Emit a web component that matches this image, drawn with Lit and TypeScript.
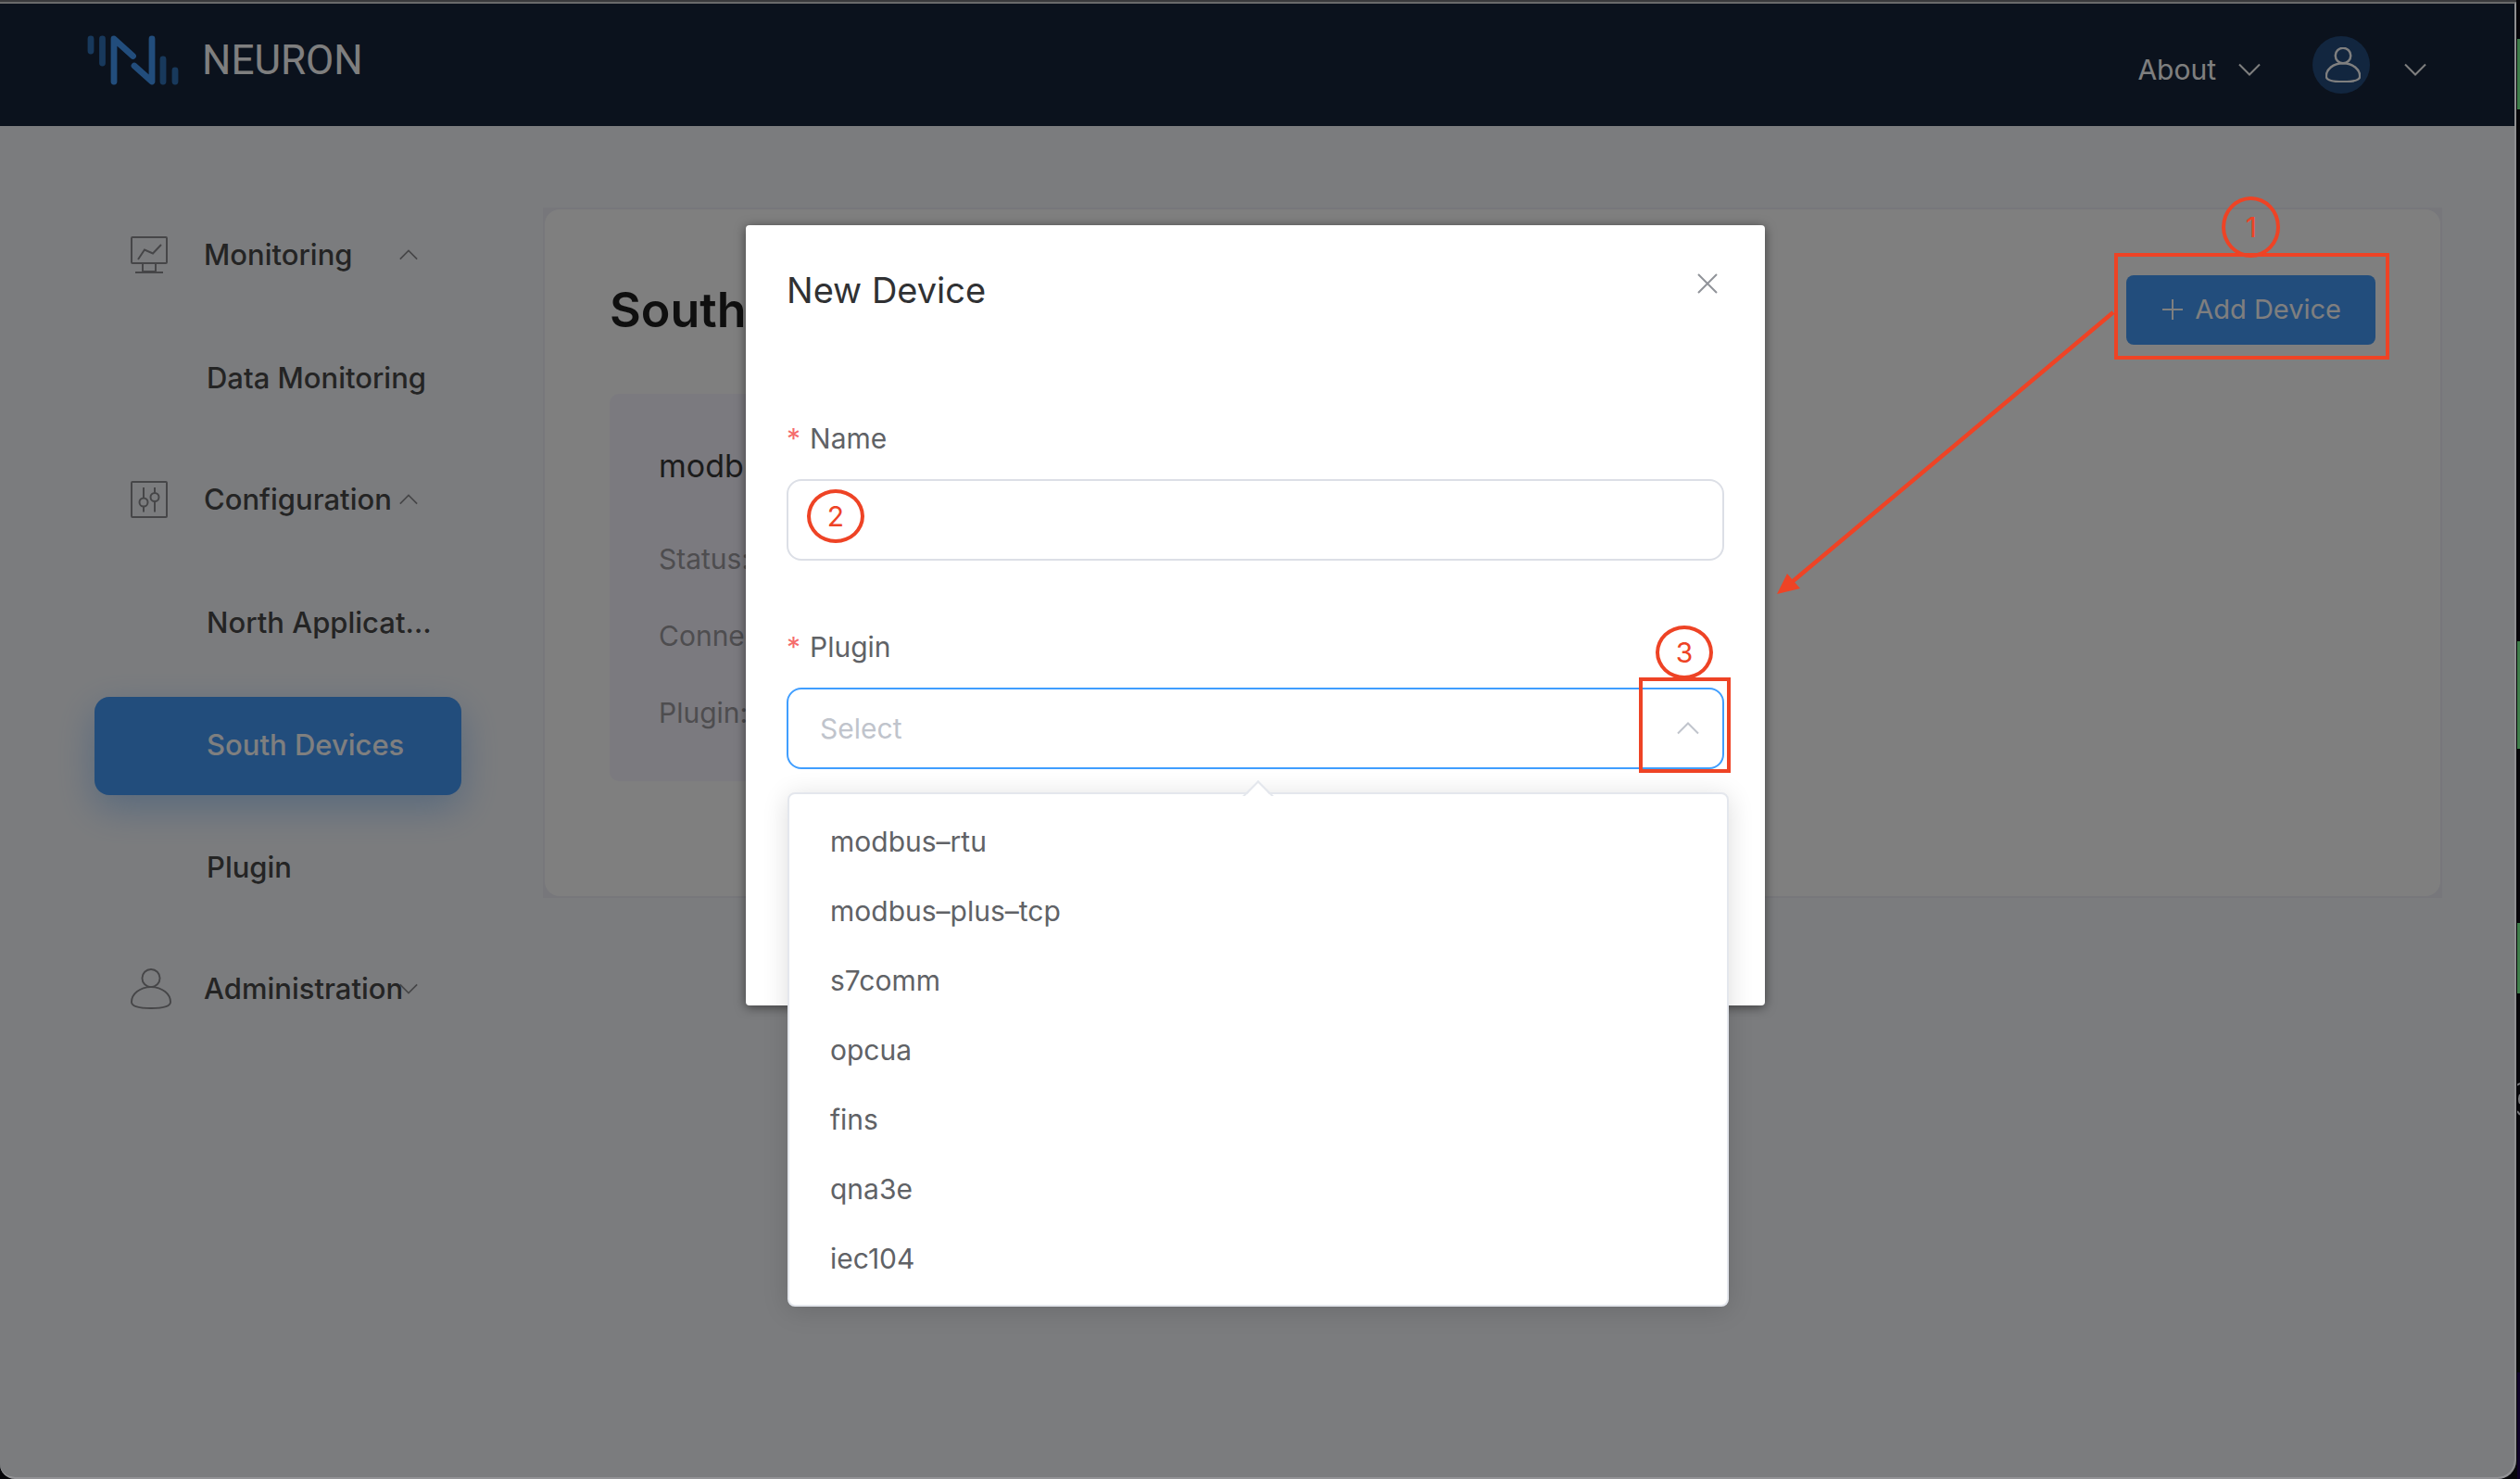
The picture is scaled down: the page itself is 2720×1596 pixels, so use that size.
import { LitElement, html, css, svg, nothing } from "lit";
import { customElement, state } from "lit/decorators.js";

type Icon = "monitor" | "sliders" | "user";
interface Entry {
  label: string;
  icon?: Icon;
  open?: boolean;
  active?: boolean;
}

const NAV: Entry[] = [
  { label: "Monitoring", icon: "monitor", open: true },
  { label: "Data Monitoring" },
  { label: "Configuration", icon: "sliders", open: true },
  { label: "North Applications" },
  { label: "South Devices", active: true },
  { label: "Plugin" },
  { label: "Administration", icon: "user", open: false },
];

const PLUGINS = ["modbus–rtu", "modbus–plus–tcp", "s7comm", "opcua", "fins", "qna3e", "iec104"];

const userIcon = (cls: string) => html`<svg class=${cls} viewBox="0 0 46 46" fill="none" stroke="currentColor" aria-hidden="true">
  <circle cx="23" cy="11" r="10"></circle>
  <path d="M23 21C10 21 1 29 1 38C1 43 10 45 23 45S45 43 45 38C45 29 36 21 23 21Z"></path>
</svg>`;

const icons = {
  monitor: html`<svg class="nav-icon" viewBox="0 0 40 40" fill="none" stroke="currentColor" stroke-width="2" aria-hidden="true">
    <rect x="1" y="1" width="38" height="28" rx="1"></rect>
    <path d="M8 25L15 14.500L24 18.500L33 9M13 29V38H27V29M5 39H35"></path>
  </svg>`,
  sliders: html`<svg class="nav-icon" viewBox="0 0 40 40" fill="none" stroke="currentColor" stroke-width="2" aria-hidden="true">
    <rect x="1" y="1" width="38" height="38" rx="1"></rect>
    <circle cx="14" cy="23" r="4.500"></circle>
    <circle cx="26" cy="17.500" r="4.500"></circle>
    <path d="M14 7V18.500M14 27.500V33.500M26 7V13M26 22V33.500"></path>
  </svg>`,
  user: userIcon("nav-icon nav-user"),
};

const chevron = (cls: string, up: boolean) => html`<svg class=${cls} viewBox="0 0 24 14" fill="none" stroke="currentColor" stroke-width="2" aria-hidden="true">
  ${up ? svg`<path d="M1 12.500L12 1.500L23 12.500"></path>` : svg`<path d="M1 1.500L12 12.500L23 1.500"></path>`}
</svg>`;

@customElement("app-root")
export class AppRoot extends LitElement {
  @state() private dialog = true;
  @state() private dropdown = true;
  @state() private plugin = "";

  static styles = css`
    :host {
      display: block;
      font-family: Inter, "Liberation Sans", sans-serif;
      font-size: 30px;
      line-height: 40px;
      color: #484848;
      --blue: #459af8;
      --red: #ee4325;
    }
    * {
      box-sizing: border-box;
    }
    button,
    input,
    select {
      font: inherit;
      color: inherit;
      margin: 0;
      padding: 0;
      border: 0;
      background: none;
    }
    a {
      color: inherit;
      text-decoration: none;
    }
    .desktop {
      display: grid;
      grid-template-columns: 1fr 3px;
      column-gap: 1px;
      min-height: 100vh;
      background: #07070a;
    }
    .window {
      position: relative;
      display: flex;
      flex-direction: column;
      border-top: 2px solid #6a6a6b;
      border-right: 2px solid #8f8f91;
      border-bottom: 2px solid #929295;
      border-radius: 0 0 20px 16px;
      margin-top: 2px;
      box-shadow: 0 -2px #3a3a3d;
      background: #f7f9fd;
      overflow: hidden;
    }
    .backdrop {
      position: absolute;
      inset: 0;
      background: rgba(0, 0, 0, 0.5);
      z-index: 10;
    }
    .strip {
      display: grid;
      grid-template-rows: 42px 76px 574px 116px 188px 76px 96px 36px 277px 1fr;
      overflow: hidden;
    }
    .green {
      background: #3e7d49;
    }
    .green:nth-child(1) {
      grid-row: 2;
    }
    .green:nth-child(2) {
      grid-row: 4;
    }
    .green:nth-child(3) {
      grid-row: 6;
    }
    .glyph {
      grid-row: 8;
      width: 3px;
      height: 36px;
    }
    .dusk {
      grid-row: 10;
      background: #0f0228;
    }
    header {
      display: flex;
      align-items: center;
      justify-content: space-between;
      height: 132px;
      padding: 0 95px 0 94px;
      background: #16243a;
      color: #fff;
    }
    .brand {
      display: flex;
      align-items: center;
      gap: 24px;
      padding-bottom: 10px;
      font: 400 44px/52px Roboto, sans-serif;
    }
    .logo {
      width: 100px;
      height: 54px;
    }
    .tools {
      display: flex;
      align-items: center;
    }
    .menu {
      display: flex;
      align-items: center;
      gap: 24px;
      padding-top: 10px;
    }
    .tool-chevron {
      width: 24px;
      height: 14px;
    }
    .avatar {
      display: grid;
      place-items: center;
      width: 62px;
      height: 62px;
      padding-left: 4px;
      margin: 0 37px 0 56px;
      border-radius: 50%;
      background: #244c7e;
    }
    .avatar-icon {
      width: 38px;
      height: 38px;
      stroke-width: 3px;
    }
    .body {
      display: flex;
      align-items: flex-start;
      gap: 88px;
      padding: 88px 78px 88px 102px;
    }
    nav {
      display: flex;
      flex-direction: column;
      gap: 26px;
      width: 396px;
      flex: none;
      font-size: 31px;
      font-weight: 500;
    }
    .item {
      display: grid;
      grid-template-columns: 46px 1fr;
      align-items: center;
      column-gap: 36px;
      height: 106px;
      padding: 0 30px 2px 39px;
      border-radius: 16px;
      text-align: left;
    }
    .item.active {
      background: var(--blue);
      color: #fff;
      box-shadow: 0 14px 40px rgba(69, 154, 248, 0.4);
    }
    .text {
      grid-column: 2;
      overflow: hidden;
      white-space: nowrap;
      text-overflow: ellipsis;
    }
    .item.group {
      grid-template-columns: 46px 244px 20px;
      column-gap: 0;
      padding: 0 0 4px 39px;
    }
    .item.group .text {
      padding-left: 33px;
      overflow: visible;
    }
    .nav-icon {
      width: 40px;
      height: 40px;
      color: #8c8c90;
    }
    .nav-user {
      width: 44px;
      height: 46px;
      stroke-width: 2px;
    }
    .nav-chevron {
      width: 20px;
      height: 12px;
      color: #8c8c90;
    }
    .frame {
      flex: 1;
      min-width: 0;
      padding: 2px;
      background: #eeeff6;
    }
    .panel {
      display: flex;
      flex-direction: column;
      gap: 53px;
      padding: 71px 70px 124px;
      border-radius: 16px;
      background: #fff;
    }
    .panel-head {
      display: flex;
      align-items: center;
      justify-content: space-between;
    }
    h1 {
      margin: 0;
      font-size: 52px;
      line-height: 60px;
      font-weight: 600;
      color: #1e1e1e;
    }
    .add-wrap {
      position: relative;
    }
    .add {
      display: flex;
      align-items: center;
      gap: 12px;
      height: 75px;
      padding: 0 37px 2px 38px;
      border-radius: 8px;
      background: var(--blue);
      color: #fff;
      font-size: 29px;
    }
    .plus {
      width: 24px;
      height: 24px;
    }
    .device {
      width: 570px;
      height: 418px;
      padding: 58px 53px;
      border-radius: 10px;
      background: #f6f4ff;
    }
    h2 {
      margin: 0 0 60px;
      font-size: 34px;
      line-height: 40px;
      font-weight: 400;
      color: #383838;
    }
    .device p {
      margin: 0 0 43px;
      color: #9c9a9f;
    }
    .dialog {
      position: absolute;
      z-index: 15;
      top: 239px;
      left: 50%;
      margin-left: -552px;
      width: 1100px;
      height: 842px;
      padding: 50px 44px;
      border-radius: 4px;
      background: #fff;
      box-shadow: 0 2px 12px rgba(0, 0, 0, 0.5);
      color: #606266;
    }
    .dialog-head {
      display: flex;
      align-items: flex-start;
      justify-content: space-between;
      margin-bottom: 120px;
    }
    .dialog-head h2 {
      margin: 0;
      font-size: 38px;
      line-height: 40px;
      color: #303133;
    }
    .close {
      width: 22px;
      height: 22px;
      margin: 2px 7px 0 0;
      display: grid;
      color: #909399;
    }
    .field {
      display: flex;
      flex-direction: column;
      gap: 24px;
      margin-bottom: 73px;
    }
    .field label {
      display: flex;
      gap: 10px;
    }
    .star {
      color: #f56c6c;
    }
    .control {
      position: relative;
    }
    .box {
      display: block;
      width: 100%;
      height: 88px;
      padding: 0 34px;
      border: 2px solid #dcdfe6;
      border-radius: 16px;
      background: #fff;
      appearance: none;
      outline: none;
    }
    select.box {
      border-color: #409eff;
      color: #c0c4cc;
    }
    select.box.chosen {
      color: #606266;
    }
    .select-chevron {
      position: absolute;
      right: 27px;
      top: 37px;
      width: 24px;
      height: 14px;
      color: #c0c4cc;
      pointer-events: none;
    }
    .popper {
      position: absolute;
      top: 113px;
      left: 1px;
      right: -5px;
      margin: 0;
      padding: 13px 0;
      list-style: none;
      border: 2px solid #e4e7ed;
      border-radius: 8px;
      background: #fff;
      box-shadow: 0 4px 28px rgba(0, 0, 0, 0.14);
    }
    .popper::before {
      content: "";
      position: absolute;
      top: -10px;
      left: 50%;
      width: 20px;
      height: 20px;
      margin-left: -12px;
      background: linear-gradient(135deg, #fff 50%, transparent 50%);
      border: 2px solid #e4e7ed;
      border-right-color: transparent;
      border-bottom-color: transparent;
      transform: rotate(45deg);
    }
    .popper button {
      display: block;
      width: 100%;
      height: 75px;
      padding: 0 44px;
      text-align: left;
    }
    .mark {
      position: absolute;
      z-index: 20;
      border: 4px solid var(--red);
      pointer-events: none;
    }
    .badge {
      display: grid;
      place-items: center;
      width: 62px;
      height: 58px;
      border-radius: 50%;
      color: var(--red);
    }
    .box-add {
      inset: -24px -15px -16px -13px;
    }
    .badge-add {
      width: 63px;
      height: 66px;
      left: 103px;
      top: -85px;
    }
    .badge-name {
      left: 22px;
      top: 11px;
    }
    .box-plugin {
      top: -11px;
      right: -7px;
      width: 99px;
      height: 103px;
    }
    .badge-plugin {
      top: -67px;
      right: 12px;
    }
    .arrow {
      position: absolute;
      z-index: 20;
      top: 38px;
      right: 281px;
      width: 368px;
      height: 308px;
      pointer-events: none;
    }
  `;

  private entry(e: Entry) {
    if (e.icon) {
      return html`<button class="item group" type="button" aria-expanded=${e.open ? "true" : "false"}>
        ${icons[e.icon]}<span class="text">${e.label}</span>${chevron("nav-chevron", !!e.open)}
      </button>`;
    }
    return html`<a class="item ${e.active ? "active" : ""}" href="#"><span class="text">${e.label}</span></a>`;
  }

  private pick(p: string) {
    this.plugin = p;
    this.dropdown = false;
  }

  private renderDialog() {
    return html`<div class="backdrop"></div>
      <section class="dialog" role="dialog" aria-labelledby="dialog-title">
        <div class="dialog-head">
          <h2 id="dialog-title">New Device</h2>
          <button class="close" type="button" aria-label="Close" @click=${() => (this.dialog = false)}>
            <svg viewBox="0 0 22 22" fill="none" stroke="currentColor" stroke-width="2"><path d="M1 1L21 21M21 1L1 21"></path></svg>
          </button>
        </div>
        <div class="field">
          <label for="name"><span class="star">*</span>Name</label>
          <div class="control">
            <input class="box" id="name" type="text" />
            <span class="mark badge badge-name">2</span>
          </div>
        </div>
        <div class="field">
          <label for="plugin"><span class="star">*</span>Plugin</label>
          <div class="control">
            <select class="box ${this.plugin ? "chosen" : ""}" id="plugin" .value=${this.plugin}>
              <option value="">Select</option>
              ${PLUGINS.map((p) => html`<option value=${p} ?selected=${p === this.plugin}>${p}</option>`)}
            </select>
            ${chevron("select-chevron", this.dropdown)}
            ${this.dropdown
              ? html`<ul class="popper">
                  ${PLUGINS.map((p) => html`<li><button type="button" @click=${() => this.pick(p)}>${p}</button></li>`)}
                </ul>`
              : nothing}
            <span class="mark box-plugin"></span>
            <span class="mark badge badge-plugin">3</span>
          </div>
        </div>
      </section>`;
  }

  render() {
    return html`<div class="desktop">
      <div class="window">
        <header>
          <div class="brand">
            <svg class="logo" viewBox="0 0 100 54" fill="none" stroke-width="6.800" stroke-linecap="round" stroke-linejoin="round" aria-hidden="true">
              <path stroke="#3072b8" d="M4 4V17M16.500 4V30M82 26V50M95 38V50"></path>
              <path stroke="#459af8" d="M29 50V4L49.500 22.500M51 33L70 50V4"></path>
            </svg>
            <span>NEURON</span>
          </div>
          <div class="tools">
            <button class="menu" type="button">About ${chevron("tool-chevron", false)}</button>
            <span class="avatar">${userIcon("avatar-icon")}</span>
            <button class="menu" type="button" aria-label="Account">${chevron("tool-chevron", false)}</button>
          </div>
        </header>
        <div class="body">
          <nav>${NAV.map((e) => this.entry(e))}</nav>
          <main class="frame">
            <div class="panel">
              <div class="panel-head">
                <h1>South Devices</h1>
                <div class="add-wrap">
                  <button class="add" type="button" @click=${() => (this.dialog = true)}>
                    <svg class="plus" viewBox="0 0 24 24" fill="none" stroke="currentColor" stroke-width="2" aria-hidden="true"><path d="M12 1V23M1 12H23"></path></svg>
                    Add Device
                  </button>
                  <span class="mark box-add"></span>
                  <span class="mark badge badge-add">1</span>
                  <svg class="arrow" viewBox="0 0 368 308" aria-hidden="true">
                    <path d="M366 2L18 294" stroke="#ee4325" stroke-width="4.500"></path>
                    <path d="M3 306L14 284L28 300Z" fill="#ee4325"></path>
                  </svg>
                </div>
              </div>
              <article class="device">
                <h2>modbus</h2>
                <p>Status:</p>
                <p>Connection:</p>
                <p>Plugin:</p>
              </article>
            </div>
          </main>
        </div>
        ${this.dialog ? this.renderDialog() : nothing}
      </div>
      <div class="strip">
        <i class="green"></i><i class="green"></i><i class="green"></i>
        <svg class="glyph" viewBox="0 0 3 36" fill="none" stroke="#77777a" stroke-width="2" aria-hidden="true">
          <path d="M0 3L3 1M0 31L3 35M3 13Q1 18 3 23"></path>
        </svg>
        <i class="dusk"></i>
      </div>
    </div>`;
  }
}
